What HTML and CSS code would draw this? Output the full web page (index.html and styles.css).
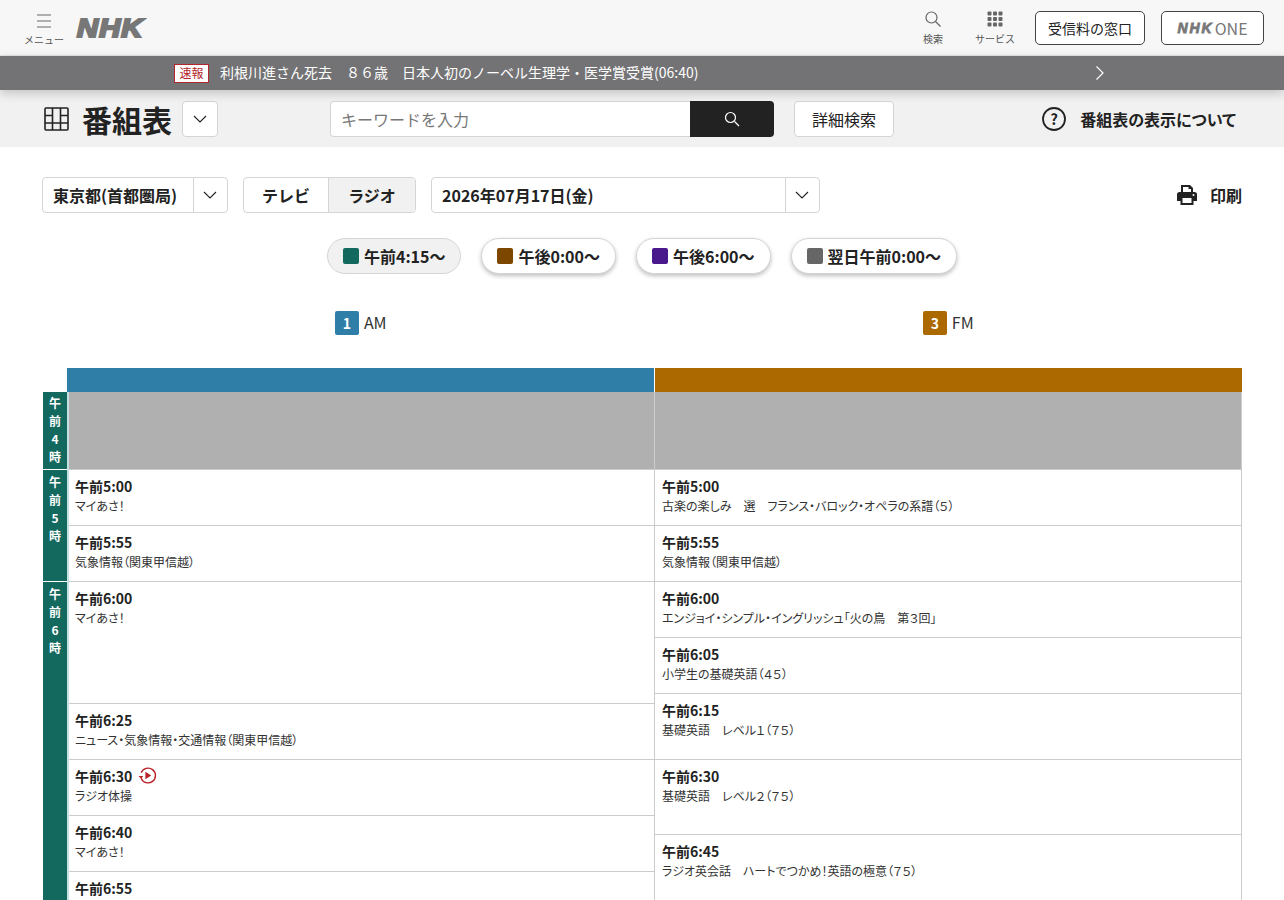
FILE: index.html
```html
<!DOCTYPE html>
<html lang="ja">
<head>
    <meta charset="UTF-8">
    <meta name="viewport" content="width=device-width, initial-scale=1.0">
    <title>番組表</title>
    <link rel="stylesheet" href="styles.css">
</head>
<body>
    <header class="site-header">
        <div class="menu-btn">
            <svg width="16" height="16" viewBox="0 0 16 16"><path d="M1 2h14M1 8h14M1 14h14" stroke="#666" stroke-width="1.2" fill="none"/></svg>
            <span>メニュー</span>
        </div>
        <div class="logo">NHK</div>
        <div class="header-right">
            <div class="head-icon search-icon">
                <svg width="16" height="16" viewBox="0 0 16 16"><circle cx="6.500" cy="6.500" r="5.500" stroke="#666" stroke-width="1.200" fill="none"/><path d="M10.500 10.500l5 5" stroke="#666" stroke-width="1.200"/></svg>
                <span>検索</span>
            </div>
            <div class="head-icon service-icon">
                <svg width="16" height="16" viewBox="0 0 16 16" fill="#666">
                    <rect x="0.5" y="0.5" width="4" height="4" rx="1"/><rect x="6" y="0.5" width="4" height="4" rx="1"/><rect x="11.5" y="0.5" width="4" height="4" rx="1"/>
                    <rect x="0.5" y="6" width="4" height="4" rx="1"/><rect x="6" y="6" width="4" height="4" rx="1"/><rect x="11.5" y="6" width="4" height="4" rx="1"/>
                    <rect x="0.5" y="11.5" width="4" height="4" rx="1"/><rect x="6" y="11.5" width="4" height="4" rx="1"/><rect x="11.5" y="11.5" width="4" height="4" rx="1"/>
                </svg>
                <span>サービス</span>
            </div>
            <a class="head-btn fee-btn">受信料の窓口</a>
            <a class="head-btn one-btn"><b>NHK</b>ONE</a>
        </div>
    </header>

    <div class="ticker">
        <span class="ticker-label">速報</span>
        <span class="ticker-text">利根川進さん死去　８６歳　日本人初のノーベル生理学・医学賞受賞(06:40)</span>
        <svg class="ticker-arrow" width="10" height="16" viewBox="0 0 10 16"><path d="M1.5 1.5L8 8l-6.500 6.500" stroke="#fff" stroke-width="1.2" fill="none"/></svg>
    </div>

    <div class="sub-header">
        <svg class="grid-icon" width="25" height="24" viewBox="0 0 25 24" fill="none" stroke="#222" stroke-width="1.600"><rect x="1" y="1" width="23" height="22" rx="1"/><path d="M8.500 1v22M16.500 1v22M1 8.500h7.500M1 16h23M16.500 8.500H24"/></svg>
        <h1>番組表</h1>
        <button class="caret-btn"><svg width="14" height="8" viewBox="0 0 14 8"><path d="M1 1l6 6 6-6" stroke="#222" stroke-width="1.1" fill="none"/></svg></button>
        <div class="search-box">
            <input type="text" placeholder="キーワードを入力">
            <button class="search-submit"><svg width="16" height="16" viewBox="0 0 16 16"><circle cx="6.500" cy="6.500" r="5" stroke="#fff" stroke-width="1.2" fill="none"/><path d="M10.500 10.500l4.500 4.500" stroke="#fff" stroke-width="1.2"/></svg></button>
        </div>
        <button class="detail-btn">詳細検索</button>
        <div class="about">
            <svg width="24" height="24" viewBox="0 0 24 24"><circle cx="12" cy="12" r="11" stroke="#222" stroke-width="1.800" fill="none"/><text x="12" y="17.500" text-anchor="middle" class="about-q">?</text></svg>
            <span>番組表の表示について</span>
        </div>
    </div>

    <main class="content">
        <div class="controls">
            <div class="select area-select">
                <span class="select-text">東京都(首都圏局)</span>
                <span class="select-caret"><svg width="14" height="8" viewBox="0 0 14 8"><path d="M1 1l6 6 6-6" stroke="#222" stroke-width="1.100" fill="none"/></svg></span>
            </div>
            <div class="tabs">
                <span class="tab">テレビ</span>
                <span class="tab tab-active">ラジオ</span>
            </div>
            <div class="select date-select">
                <span class="select-text">2026年07月17日(金)</span>
                <span class="select-caret"><svg width="14" height="8" viewBox="0 0 14 8"><path d="M1 1l6 6 6-6" stroke="#222" stroke-width="1.100" fill="none"/></svg></span>
            </div>
            <div class="print">
                <svg width="22" height="22" viewBox="0 0 22 22" fill="#222"><path d="M5 1h9l3 3v4h-2V5h-2.500V3H7v5H5z"/><path d="M3.500 8h15A2.500 2.500 0 0 1 21 10.500V17h-3.500v4h-13v-4H1v-6.500A2.500 2.500 0 0 1 3.500 8zM6.500 14v5h9v-5z"/><circle cx="17.500" cy="11" r="1" fill="#fff"/></svg>
                <span>印刷</span>
            </div>
        </div>

        <div class="time-pills">
            <span class="pill pill-active"><i class="swatch morning"></i>午前4:15～</span>
            <span class="pill"><i class="swatch noon"></i>午後0:00～</span>
            <span class="pill"><i class="swatch evening"></i>午後6:00～</span>
            <span class="pill"><i class="swatch night"></i>翌日午前0:00～</span>
        </div>

        <div class="channels">
            <div class="channel"><span class="ch-badge am">1</span><span>AM</span></div>
            <div class="channel"><span class="ch-badge fm">3</span><span>FM</span></div>
        </div>

        <div class="schedule">
            <div class="hours">
                <div class="hour h78 first-hour">午<br>前<br>4<br>時</div>
                <div class="hour h112">午<br>前<br>5<br>時</div>
                <div class="hour h320">午<br>前<br>6<br>時</div>
            </div>
            <div class="col col-left">
                <div class="col-head am"></div>
                <div class="blank"></div>
                <div class="prog h56"><b>午前5:00</b><p>マイあさ！</p></div>
                <div class="prog h56"><b>午前5:55</b><p>気象情報（関東甲信越）</p></div>
                <div class="prog h122"><b>午前6:00</b><p>マイあさ！</p></div>
                <div class="prog h56"><b>午前6:25</b><p>ニュース・気象情報・交通情報（関東甲信越）</p></div>
                <div class="prog h56"><b>午前6:30
                    <svg class="replay" width="19" height="19" viewBox="0 0 18 18"><path d="M3 6.500A7 7 0 1 1 3 11.500" stroke="#b81f26" stroke-width="1.300" fill="none"/><path d="M0.500 9.500L3 12l2-2.500z" fill="#b81f26"/><path d="M7 5.500l5.500 3.500L7 12.500z" fill="#b81f26"/></svg></b><p>ラジオ体操</p></div>
                <div class="prog h56"><b>午前6:40</b><p>マイあさ！</p></div>
                <div class="prog h56"><b>午前6:55</b></div>
            </div>
            <div class="col col-right">
                <div class="col-head fm"></div>
                <div class="blank"></div>
                <div class="prog h56"><b>午前5:00</b><p>古楽の楽しみ　選　フランス・バロック・オペラの系譜（５）</p></div>
                <div class="prog h56"><b>午前5:55</b><p>気象情報（関東甲信越）</p></div>
                <div class="prog h56"><b>午前6:00</b><p>エンジョイ・シンプル・イングリッシュ「火の鳥　第３回」</p></div>
                <div class="prog h56"><b>午前6:05</b><p>小学生の基礎英語（４５）</p></div>
                <div class="prog h66"><b>午前6:15</b><p>基礎英語　レベル１（７５）</p></div>
                <div class="prog h75"><b>午前6:30</b><p>基礎英語　レベル２（７５）</p></div>
                <div class="prog h75"><b>午前6:45</b><p>ラジオ英会話　ハートでつかめ！英語の極意（７５）</p></div>
            </div>
        </div>
    </main>
</body>
</html>
```
FILE: styles.css
```css
html, body {
    margin: 0;
    padding: 0;
    height: 900px;
    overflow: hidden;
}

body {
    font-family: "Noto Sans CJK JP", "Noto Sans", sans-serif;
    color: #222;
    background: #fff;
}

p, h1 {
    margin: 0;
}

button {
    font-family: inherit;
}

/* top header */
.site-header {
    height: 55px;
    box-sizing: content-box;
    background: #f7f7f7;
    border-bottom: 1px solid #e6e6e6;
    display: flex;
    align-items: center;
    padding-left: 24px;
    padding-right: 20px;
}

.menu-btn {
    width: 40px;
    display: flex;
    flex-direction: column;
    align-items: center;
    font-size: 10px;
    line-height: 12px;
    color: #555;
    gap: 5px;
    padding-top: 4px;
}

.logo {
    margin-left: 13px;
    font-family: "Liberation Sans", sans-serif;
    font-weight: bold;
    font-style: italic;
    font-size: 26px;
    letter-spacing: 1px;
    color: #777;
    -webkit-text-stroke: 2.2px #777;
    line-height: 30px;
    transform: scaleX(1.12);
    transform-origin: left center;
}

.header-right {
    margin-left: auto;
    display: flex;
    align-items: center;
}

.head-icon {
    display: flex;
    flex-direction: column;
    align-items: center;
    font-size: 10px;
    line-height: 14px;
    color: #555;
    gap: 5px;
    padding-top: 2px;
}

.search-icon {
    width: 40px;
    margin-right: 19px;
}

.service-icon {
    width: 46px;
    margin-right: 17px;
}

.head-btn {
    height: 34px;
    box-sizing: border-box;
    border: 1px solid #444;
    border-radius: 5px;
    background: #fff;
    display: flex;
    align-items: center;
    justify-content: center;
    font-size: 14px;
}

.fee-btn {
    width: 110px;
    margin-right: 16px;
}

.one-btn {
    width: 103px;
    color: #777;
    font-size: 16px;
}

.one-btn b {
    font-family: "Liberation Sans", sans-serif;
    font-style: italic;
    font-size: 14px;
    letter-spacing: 2px;
    -webkit-text-stroke: 0.8px #777;
    margin-right: 1px;
}

/* breaking news */
.ticker {
    height: 34px;
    background: #737375;
    color: #fff;
    display: flex;
    align-items: center;
    padding-left: 174px;
    font-size: 14px;
    position: relative;
    z-index: 2;
    box-shadow: 0 3px 10px rgba(0, 0, 0, 0.2);
}

.ticker-label {
    width: 33px;
    height: 17px;
    background: #fff;
    border: 1px solid #b3262b;
    color: #b3262b;
    font-size: 12px;
    line-height: 16px;
    text-align: center;
    margin-right: 11px;
}

.ticker-text {
    margin-top: -2px;
}

.ticker-arrow {
    position: absolute;
    left: 1095px;
    top: 9px;
}

/* page title bar */
.sub-header {
    height: 57px;
    background: #f1f1f1;
    display: flex;
    align-items: center;
    padding-left: 44px;
}

.grid-icon {
    margin-right: 13px;
}

.sub-header h1 {
    font-size: 30px;
    line-height: 36px;
    font-weight: bold;
    margin-right: 10px;
}

.caret-btn {
    width: 36px;
    height: 36px;
    background: #fff;
    border: 1px solid #d5d5d5;
    border-radius: 4px;
    padding: 0;
    display: flex;
    align-items: center;
    justify-content: center;
    margin-right: 112px;
}

.search-box {
    display: flex;
    width: 444px;
    height: 36px;
    margin-right: 20px;
}

.search-box input {
    flex: 1;
    min-width: 0;
    box-sizing: border-box;
    border: 1px solid #d5d5d5;
    border-right: none;
    border-radius: 4px 0 0 4px;
    padding: 0 10px;
    font-family: inherit;
    font-size: 16px;
    background: #fff;
}

.search-box input::placeholder {
    color: #777;
}

.search-submit {
    width: 84px;
    background: #222;
    border: none;
    border-radius: 0 4px 4px 0;
    display: flex;
    align-items: center;
    justify-content: center;
    padding: 0;
}

.detail-btn {
    width: 100px;
    height: 36px;
    background: #fff;
    border: 1px solid #d5d5d5;
    border-radius: 4px;
    font-size: 16px;
    color: #222;
}

.about {
    margin-left: auto;
    margin-right: 48px;
    display: flex;
    align-items: center;
    gap: 14px;
    font-size: 16px;
    font-weight: bold;
    font-feature-settings: "palt";
}

.about-q {
    font-size: 15px;
    font-weight: bold;
    fill: #222;
}

/* main */
.content {
    padding: 30px 42px 0 43px;
}

.controls {
    display: flex;
    align-items: center;
    height: 36px;
}

.select {
    box-sizing: border-box;
    height: 36px;
    background: #fff;
    border: 1px solid #d5d5d5;
    border-radius: 4px;
    display: flex;
    align-items: center;
    font-size: 16px;
    font-weight: bold;
}

.select-text {
    flex: 1;
    padding-left: 10px;
}

.select-caret {
    width: 32px;
    padding-right: 1px;
    height: 100%;
    border-left: 1px solid #d5d5d5;
    display: flex;
    align-items: center;
    justify-content: center;
}

.area-select {
    width: 186px;
    margin-left: -1px;
    margin-right: 15px;
}

.date-select {
    width: 389px;
}

.tabs {
    box-sizing: border-box;
    width: 173px;
    height: 36px;
    border: 1px solid #d5d5d5;
    border-radius: 4px;
    display: flex;
    margin-right: 15px;
    overflow: hidden;
}

.tab {
    width: 84px;
    display: flex;
    align-items: center;
    justify-content: center;
    font-size: 16px;
    font-weight: bold;
}

.tab-active {
    flex: 1;
    background: #f1f1f1;
    border-left: 1px solid #d5d5d5;
}

.print {
    margin-left: auto;
    display: flex;
    align-items: center;
    gap: 12px;
    font-size: 16px;
    font-weight: bold;
}

.time-pills {
    display: flex;
    justify-content: center;
    gap: 20px;
    margin-top: 25px;
    padding-right: 1px;
}

.pill {
    box-sizing: border-box;
    height: 36px;
    padding: 0 15px;
    border: 1px solid #d5d5d5;
    border-radius: 18px;
    background: #fff;
    box-shadow: 0 2px 4px rgba(0, 0, 0, 0.25);
    display: flex;
    align-items: center;
    font-size: 16px;
    font-weight: bold;
}

.pill-active {
    background: #f1f1f1;
    box-shadow: none;
}

.swatch {
    width: 16px;
    height: 16px;
    border-radius: 2px;
    margin-right: 5px;
}

.morning { background: #14695f; }
.noon { background: #7e4700; }
.evening { background: #4a1a8c; }
.night { background: #666; }

.channels {
    display: flex;
    margin-top: 37px;
    padding-left: 24px;
}

.channel {
    flex: 1;
    display: flex;
    align-items: center;
    justify-content: center;
    gap: 5px;
    height: 24px;
    font-size: 16px;
    line-height: 22px;
    color: #333;
}

.channel span:last-child {
    margin-top: -2px;
}

.ch-badge {
    width: 24px;
    height: 24px;
    border-radius: 2px;
    color: #fff;
    font-size: 14px;
    font-weight: bold;
    line-height: 24px;
    text-align: center;
}

.am { background: #2e7ea8; }
.fm { background: #ac6900; }

/* schedule table */
.schedule {
    display: flex;
    margin-top: 33px;
}

.hours {
    width: 24px;
    padding-top: 24px;
    border-right: 2px solid #c4e0e0;
}

.hour {
    box-sizing: border-box;
    background: #14695f;
    color: #fff;
    font-size: 12px;
    font-weight: bold;
    line-height: 18px;
    text-align: center;
    padding-top: 3px;
    border-bottom: 1px solid #fff;
}

.first-hour {
    padding-top: 2px;
}

.h78 { height: 78px; }
.h112 { height: 112px; }
.h320 { height: 320px; }

.col {
    border-right: 1px solid #ccc;
}

.col-left {
    width: 585px;
}

.col-right {
    width: 586px;
}

.col-head {
    height: 24px;
}

.col-left .col-head {
    margin-left: -2px;
    margin-right: -1px;
    border-right: 1px solid #fff;
}

.col-right .col-head {
    margin-right: -1px;
}

.blank {
    box-sizing: border-box;
    height: 78px;
    background: #b0b0b0;
    border-bottom: 1px solid #ccc;
}

.prog {
    box-sizing: border-box;
    border-bottom: 1px solid #ccc;
    padding: 6px 7px 0;
    background: #fff;
}

.col-left .prog {
    padding-left: 6px;
}

.prog b {
    display: flex;
    align-items: center;
    gap: 6px;
    font-size: 14px;
    line-height: 20px;
}

.replay {
    margin-top: -2px;
}

.prog p {
    font-size: 12px;
    line-height: 18px;
    color: #333;
    margin-top: 1px;
    font-feature-settings: "palt";
}

.h56 { height: 56px; }
.h66 { height: 66px; }
.h75 { height: 75px; }
.h122 { height: 122px; }
```
